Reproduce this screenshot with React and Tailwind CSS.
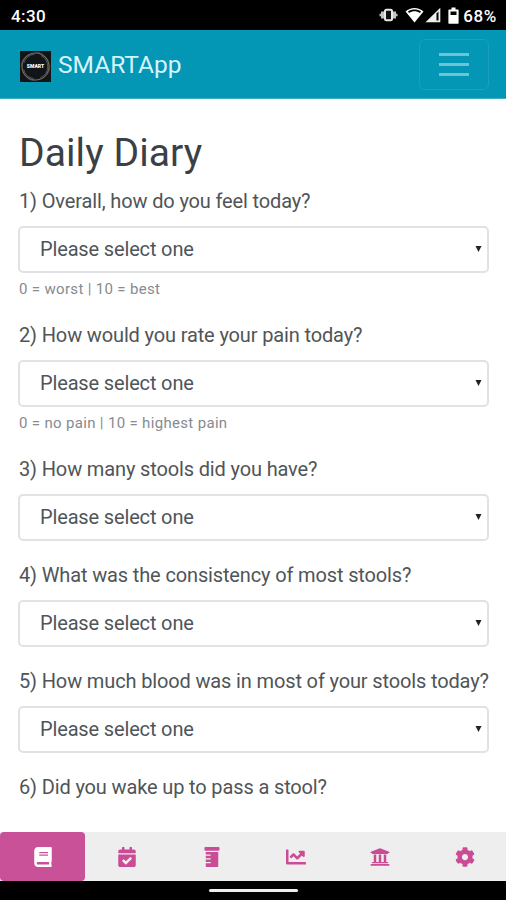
import React from 'react';
import { FaBook, FaCalendarCheck, FaPrescriptionBottle, FaChartLine, FaUniversity, FaCog } from 'react-icons/fa';

const questions = [
    { label: '1) Overall, how do you feel today?', hint: '0 = worst | 10 = best' },
    { label: '2) How would you rate your pain today?', hint: '0 = no pain | 10 = highest pain' },
    { label: '3) How many stools did you have?' },
    { label: '4) What was the consistency of most stools?' },
    { label: '5) How much blood was in most of your stools today?' },
];

const tabs = [
    { name: 'Diary', icon: FaBook },
    { name: 'Calendar', icon: FaCalendarCheck },
    { name: 'Medication', icon: FaPrescriptionBottle },
    { name: 'Charts', icon: FaChartLine },
    { name: 'Resources', icon: FaUniversity },
    { name: 'Settings', icon: FaCog },
];

const StatusBar = () => (
    <div className="flex h-[30px] shrink-0 items-center justify-between bg-black pl-[11px] pr-[9px] text-[17px] font-medium text-white">
        <span className="pt-[3px] tracking-[0.4px]">4:30</span>
        <div className="flex items-center">
            {/* Vibrate */}
            <svg className="mr-[7px] h-[16px] w-[19px]" viewBox="0 0 19 16">
                <path d="M0.5 6.8h1.500v-2.300h3.200v7H2v-2.300H0.500zM18.500 6.800h-1.500v-2.300h-3.200v7h3.200v-2.300h1.500z" fill="#c4c4c4" />
                <rect x="6" y="2.800" width="7" height="10.400" rx="1.500" fill="#111111" stroke="#e8e8e8" strokeWidth="2" />
            </svg>
            {/* Wifi */}
            <svg className="mr-[1px] h-[16px] w-[19px]" viewBox="0 0 19 16">
                <path d="M0.5 4.5C5.5-0.3 13.5-0.3 18.5 4.5L9.5 15.5Z" fill="white" />
                <path d="M3 4.5C7 1.900 12 1.900 16 4.500L15 5.900C11.500 3.700 7.500 3.700 4 5.900Z" fill="black" />
            </svg>
            {/* Signal */}
            <svg className="mr-[7px] h-[16px] w-[16px]" viewBox="0 0 16 16">
                <path d="M15.3 0.7V15.3H0.5Z" fill="#eeeeee" />
                <path d="M11.5 6.5V13.5H13.5V4.5Z" fill="black" />
            </svg>
            {/* Battery */}
            <svg className="mr-[4px] h-[17px] w-[11px]" viewBox="0 0 11 17">
                <path d="M3.5 0.5h4v2H10a.6.6 0 0 1 .6.6v13a.6.6 0 0 1-.6.6H1a.6.6 0 0 1-.6-.6v-13A.6.6 0 0 1 1 2.5h2.5z" fill="white" />
                <path d="M2.5 4.500h6v3.500h-6z" fill="black" />
            </svg>
            <span className="pt-[3px] tracking-[0.6px]">68%</span>
        </div>
    </div>
);

const Header = () => (
    <header className="flex h-[69px] shrink-0 items-center justify-between border-b border-[#3dacc5] bg-[#0396b5] pl-[20px] pr-[17px]">
        <div className="flex items-center gap-[7px] text-[#d8f3fa]">
            <div className="relative mt-[4px] flex h-[31px] w-[31px] items-center justify-center bg-[#131416]">
                <svg className="absolute inset-0 h-full w-full" viewBox="0 0 31 31" fill="none">
                    <circle cx="15.5" cy="15.5" r="13.5" stroke="#7d705a" strokeWidth="1.1" />
                    <circle cx="15.5" cy="15.5" r="12.2" stroke="#46627c" strokeWidth="0.9" strokeDasharray="14 7" />
                    <circle cx="15.5" cy="15.5" r="14.3" stroke="#69456f" strokeWidth="0.7" strokeDasharray="9 13" />
                </svg>
                <span className="relative text-[5px] font-black leading-none text-white">SMART</span>
            </div>
            <span className="pt-[3px] text-[24.5px] leading-none">SMARTApp</span>
        </div>
        <button aria-label="Menu" className="flex h-[51px] w-[70px] flex-col items-center justify-center gap-[7px] rounded-[6px] border border-[#1c9fbc]">
            <span className="h-[3px] w-[30px] bg-[#6cc3d6]" />
            <span className="h-[3px] w-[30px] bg-[#6cc3d6]" />
            <span className="h-[3px] w-[30px] bg-[#6cc3d6]" />
        </button>
    </header>
);

const Question = ({ label, hint }) => (
    <div className={hint ? 'h-[134px]' : 'h-[106px]'}>
        <p className="h-[40px] whitespace-nowrap text-[20px] leading-[30px] tracking-[-0.14px] text-[#505558]">{label}</p>
        <div className="-ml-px -mr-[2px] flex h-[47px] items-center justify-between rounded-[5px] border-2 border-[#e0e2e4] pb-[2px] pl-[20px] pr-[5px] text-[20px] tracking-[-0.15px] text-[#505558]">
            <span>Please select one</span>
            <svg className="h-[6px] w-[7px]" viewBox="0 0 7 6">
                <path d="M0.500 0h6L3.500 6z" fill="#222222" />
            </svg>
        </div>
        {hint && <p className="pt-[4px] text-[15px] leading-[24px] tracking-[0.33px] text-[#858b90]">{hint}</p>}
    </div>
);

const TabBar = () => (
    <nav className="grid h-[49px] shrink-0 grid-cols-6 bg-[#eeeeee]">
        {tabs.map(({ name, icon: Icon }, i) => (
            <button
                key={name}
                aria-label={name}
                className={`flex items-center justify-center ${i === 0 ? '-mr-px rounded-[4px] bg-[#c95197] text-white' : 'pl-[2px] text-[#c94c95]'}`}
            >
                <Icon size={20} />
            </button>
        ))}
    </nav>
);

export default function App() {
    return (
        <div className="flex h-[900px] w-[506px] flex-col overflow-hidden bg-white font-['Roboto',sans-serif]">
            <StatusBar />
            <Header />
            <main className="min-h-0 flex-1 overflow-hidden px-[19px] pt-[29px]">
                <h1 className="h-[58px] text-[39px] leading-[50px] tracking-[0.1px] text-[#3b4044]">Daily Diary</h1>
                {questions.map((q) => (
                    <Question key={q.label} {...q} />
                ))}
                <p className="text-[20px] leading-[30px] tracking-[-0.14px] text-[#505558]">6) Did you wake up to pass a stool?</p>
            </main>
            <TabBar />
            <div className="flex h-[19px] shrink-0 items-center justify-center bg-black">
                <div className="h-[3px] w-[89px] rounded-full bg-[#eeeeee]" />
            </div>
        </div>
    );
}
